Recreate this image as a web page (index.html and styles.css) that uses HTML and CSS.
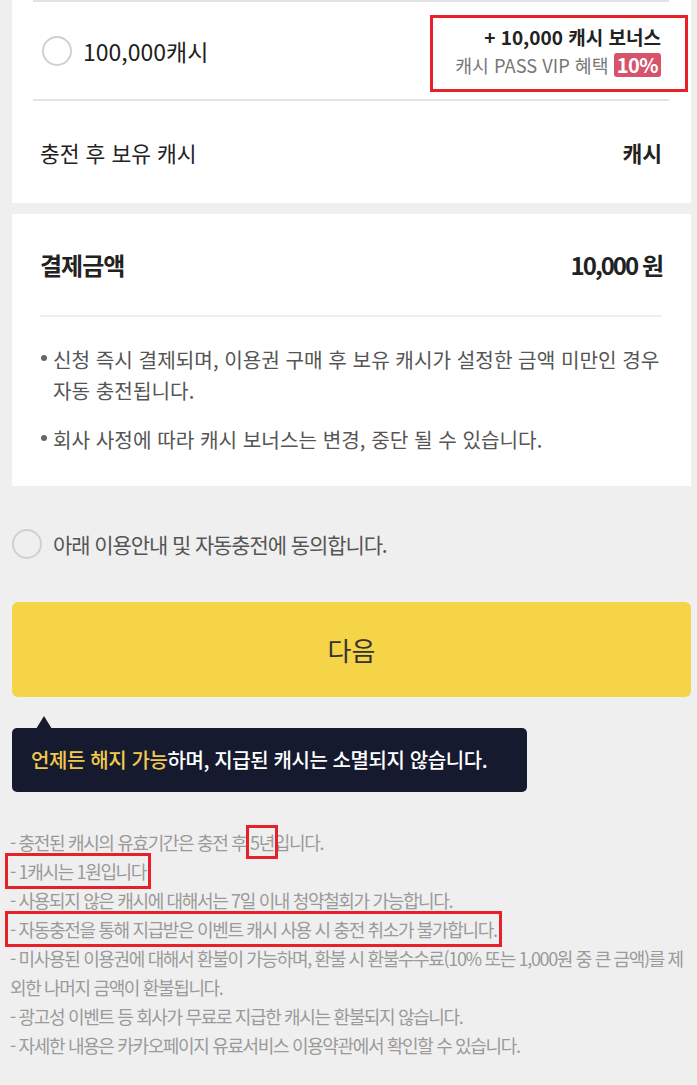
FILE: index.html
```html
<!DOCTYPE html>
<html lang="ko">
<head>
  <meta charset="UTF-8" />
  <title>캐시 자동충전</title>
  <link rel="stylesheet" href="styles.css">
</head>
<body>

  <div class="page">
    <div class="card card-top">
      <div class="option">
        <div class="option-left">
          <span class="radio"></span>
          <span class="amount">100,000캐시</span>
        </div>
        <div class="bonus mark">
          <div class="bonus-title">+ 10,000 캐시 보너스</div>
          <div class="bonus-sub">캐시 PASS VIP 혜택 <span class="badge">10%</span></div>
        </div>
      </div>
      <div class="row balance">
        <span>충전 후 보유 캐시</span>
        <strong>캐시</strong>
      </div>
    </div>

    <div class="card card-pay">
      <div class="row pay-head">
        <strong>결제금액</strong>
        <strong class="price">10,000 원</strong>
      </div>
      <ul class="bullets">
        <li>신청 즉시 결제되며, 이용권 구매 후 보유 캐시가 설정한 금액 미만인 경우 자동 충전됩니다.</li>
        <li>회사 사정에 따라 캐시 보너스는 변경, 중단 될 수 있습니다.</li>
      </ul>
    </div>

    <label class="agree">
      <span class="radio"></span>
      <span>아래 이용안내 및 자동충전에 동의합니다.</span>
    </label>

    <button class="next">다음</button>

    <div class="tip">
      <span class="hl">언제든 해지 가능</span>하며, 지급된 캐시는 소멸되지 않습니다.
    </div>

    <ul class="notes">
      <li>- 충전된 캐시의 유효기간은 충전 후 <span class="mark-in">5년</span>입니다.</li>
      <li><span class="mark-line">- 1캐시는 1원입니다</span></li>
      <li>- 사용되지 않은 캐시에 대해서는 7일 이내 청약철회가 가능합니다.</li>
      <li><span class="mark-line">- 자동충전을 통해 지급받은 이벤트 캐시 사용 시 충전 취소가 불가합니다.</span></li>
      <li>- 미사용된 이용권에 대해서 환불이 가능하며, 환불 시 환불수수료(10% 또는 1,000원 중 큰 금액)를 제외한 나머지 금액이 환불됩니다.</li>
      <li>- 광고성 이벤트 등 회사가 무료로 지급한 캐시는 환불되지 않습니다.</li>
      <li>- 자세한 내용은 카카오페이지 유료서비스 이용약관에서 확인할 수 있습니다.</li>
    </ul>
  </div>

</body>
</html>
```

FILE: styles.css
```css
body {
  margin: 0;
  background: #efefef;
  font-family: "Noto Sans CJK KR", "Noto Sans", sans-serif;
  color: #222;
}
.page {
  padding: 0 6px 0 12px;
}
.card {
  background: #fff;
}
.card-top {
  padding: 0 22px 0 21px;
}
.option {
  display: flex;
  justify-content: space-between;
  align-items: center;
  height: 97px;
  border-top: 2px solid #e3e3e3;
  border-bottom: 2px solid #e3e3e3;
}
.option-left {
  display: flex;
  align-items: center;
  padding-left: 9px;
}
.radio {
  display: inline-block;
  width: 26px;
  height: 26px;
  border: 2px solid #d0d0d0;
  border-radius: 50%;
  flex: none;
}
.amount {
  font-size: 23px;
  margin-left: 11px;
  color: #222;
}
.bonus {
  width: 258px;
  box-sizing: border-box;
  margin-right: -19px;
  margin-top: 6px;
  padding: 5px 24px 10px 0;
  text-align: right;
}
.mark {
  border: 3px solid #e8202a;
}
.bonus-title {
  font-size: 19px;
  font-weight: bold;
  line-height: 28px;
  color: #222;
}
.bonus-sub {
  font-size: 18.3px;
  line-height: 28px;
  color: #777;
}
.badge {
  display: inline-block;
  background: #d5536b;
  color: #fff;
  font-weight: bold;
  font-size: 20px;
  line-height: 24px;
  padding: 0 3px;
  border-radius: 3px;
  letter-spacing: -0.5px;
}
.row {
  display: flex;
  justify-content: space-between;
  align-items: center;
}
.balance {
  height: 102px;
  padding: 0 7px;
  font-size: 21.5px;
}
.balance strong {
  font-size: 21.5px;
}
.card-pay {
  margin-top: 11px;
  padding: 0 29px 31px 28px;
}
.pay-head {
  height: 101px;
  border-bottom: 2px solid #eeeeee;
  font-size: 24px;
  letter-spacing: -1px;
}
.price {
  letter-spacing: -2px;
}
.bullets {
  list-style: none;
  margin: 0;
  padding: 27px 0 0 13px;
  font-size: 20.2px;
  line-height: 31px;
  color: #555;
}
.bullets li {
  position: relative;
}
.bullets li + li {
  margin-top: 18px;
}
.bullets li::before {
  content: "";
  position: absolute;
  left: -12px;
  top: 11px;
  width: 6px;
  height: 6px;
  border-radius: 50%;
  background: #666;
}
.agree {
  display: flex;
  align-items: center;
  margin-top: 43px;
  font-size: 21px;
  color: #555;
  letter-spacing: -1.1px;
}
.agree .radio {
  margin-right: 11px;
}
.next {
  display: block;
  width: 100%;
  height: 95px;
  margin-top: 43px;
  border: none;
  border-radius: 6px;
  background: #f6d448;
  font-family: inherit;
  font-size: 26px;
  color: #333;
}
.tip {
  position: relative;
  display: inline-block;
  margin-top: 31px;
  width: 515px;
  box-sizing: border-box;
  padding: 18px 19px 19px;
  background: #151a2f;
  border-radius: 5px;
  color: #fff;
  font-size: 20px;
  font-weight: 500;
  line-height: 27px;
  letter-spacing: -0.4px;
}
.tip::before {
  content: "";
  position: absolute;
  left: 24px;
  top: -12px;
  border-left: 8px solid transparent;
  border-right: 8px solid transparent;
  border-bottom: 13px solid #151a2f;
}
.hl {
  color: #f3c94d;
}
.notes {
  list-style: none;
  margin: 36px 0 0 -2px;
  padding: 0;
  font-size: 18px;
  line-height: 29px;
  color: #9a9a9a;
  letter-spacing: -1.35px;
}
.mark-in {
  outline: 3px solid #e8202a;
  outline-offset: 1px;
}
.mark-line {
  outline: 3px solid #e8202a;
  outline-offset: 2px;
}
```
